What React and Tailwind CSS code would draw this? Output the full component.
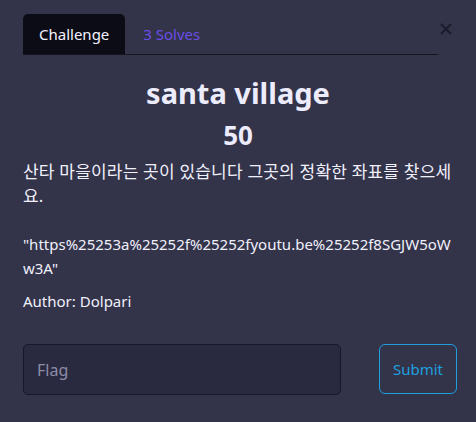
const App = () => {
  return (
    <div
      className="min-h-[422px] w-[476px] bg-[#33334a] text-[#f0f0fa]"
      style={{ fontFamily: '"Noto Sans", "Noto Sans CJK KR", sans-serif' }}
    >
      <div className="pl-[23px] pr-[23px] pt-[14px]">
        {/* Tabs + close */}
        <div className="flex items-start">
          <div className="flex flex-1 border-b border-[#16161f]">
            <div className="rounded-t-[5px] bg-[#0c0c16] px-4 py-2 text-[15px] leading-6 text-[#f3f3ff]">
              Challenge
            </div>
            <div className="px-[18px] py-2 text-[15px] leading-6 text-[#6b4ee6]">3 Solves</div>
          </div>
          <button className="ml-[1px] mt-[8px] flex h-[14px] w-[14px] items-center justify-center text-[#1c1c2c]">
            <svg width="12" height="12" viewBox="0 0 12 12">
              <path d="M1 1L11 11M11 1L1 11" stroke="currentColor" strokeWidth="2.2" />
            </svg>
          </button>
        </div>

        {/* Title */}
        <h2 className="mt-[19px] text-center text-[29px] font-bold leading-[38px] text-[#ececfc]">
          santa village
        </h2>
        <h3 className="mt-[6px] text-center text-[26px] font-bold leading-[34px] text-[#ececfc]">50</h3>

        {/* Description */}
        <div className="mt-[8px] text-[15px] leading-6">
          <p className="text-[17px] tracking-[0.2px]">산타 마을이라는 곳이 있습니다 그곳의 정확한 좌표를 찾으세요.</p>
          <p className="mt-[24px] break-all">"https%25253a%25252f%25252fyoutu.be%25252f8SGJW5oWw3A"</p>
          <p className="mt-[9px]">Author: Dolpari</p>
        </div>

        {/* Flag form */}
        <div className="mr-[-4px] mt-[31px] flex items-start justify-between">
          <input
            placeholder="Flag"
            className="h-[51px] w-[318px] rounded-[5px] border border-[#17172a] bg-[#292940] px-[13px] text-[16px] text-white outline-none placeholder:text-[#8d8da6]"
          />
          <button className="h-[50px] w-[78px] rounded-[6px] border border-[#1ea0df] text-[15px] text-[#1ea0df]">
            Submit
          </button>
        </div>
      </div>
    </div>
  );
};

export default App;
